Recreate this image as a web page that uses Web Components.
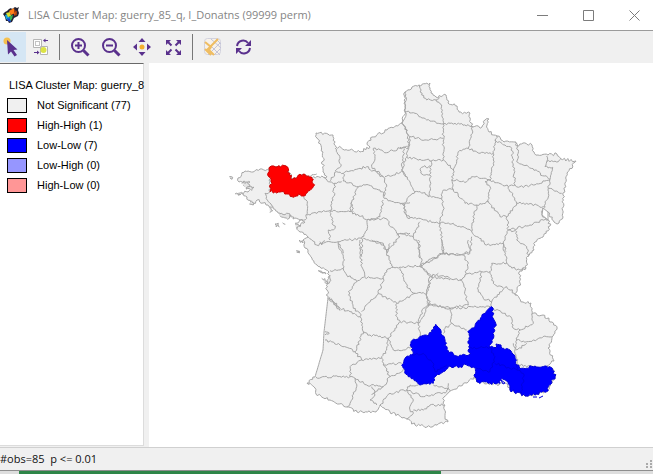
<!DOCTYPE html>
<html lang="en">
<head>
<meta charset="utf-8">
<title>LISA Cluster Map</title>
<style>
html, body { height: 100%; margin: 0; }
body { overflow: hidden; background: #e1e1e1; font-family: "Open Sans", "Noto Sans", sans-serif; }
</style>
</head>
<body>
<cluster-window></cluster-window>

<script>
const define = (name, html, setup) => {
  const template = document.createElement('template');
  template.innerHTML = html;
  customElements.define(name, class extends HTMLElement {
    constructor() {
      super();
      this.attachShadow({ mode: 'open' }).append(template.content.cloneNode(true));
    }
    connectedCallback() { if (setup) setup(this.shadowRoot, this); }
  });
};

define('title-bar', `
<style>
:host { display: flex; align-items: center; height: 30px; background: #fff; color: #858585; border-bottom: 1px solid #9b9b9b; }
.logo { width: 18px; height: 18px; margin: 0 8px 0 2px; flex: none; }
h1 { font-size: 11px; line-height: 16px; font-weight: 400; margin: 0; flex: 1; white-space: nowrap; }
.controls { display: flex; margin-right: -4px; }
button { width: 46px; height: 28px; border: 0; padding: 0; background: none; display: grid; place-items: center; }
button svg { width: 11px; height: 11px; fill: none; stroke: #7c7c7c; }
</style>
<svg class="logo" viewBox="0 0 18 18" aria-hidden="true">
<path fill="#223" d="M1 8l2-2 2-1 2-2 2-1 1 1 3-2 2 1 2-1-1 3 1 3-1 3-4 2-2 4-3 1-1-2-2 0-1-4z"/>
<path fill="#19a8d8" d="M3 9l3-1 2 4-1 3-3-2z"/><path fill="#1646d0" d="M5 12l4 1v3l-3-1z"/>
<path fill="#d8e12c" d="M4 7l4-1 1 4-3 1z"/><path fill="#35b454" d="M8 10l3-1-1 4-2 2z"/>
<path fill="#ff7e16" d="M7 5l5-3 1 5-4 2z"/><path fill="#9c3d12" d="M12 4l3 1v4l-3 1z"/><path fill="#e45a10" d="M11 7l3-1-1 3z"/>
</svg>
<h1><slot></slot></h1>
<div class="controls">
<button aria-label="Minimize"><svg viewBox="0 0 11 11"><path d="M0 5.5h11"/></svg></button>
<button aria-label="Maximize"><svg viewBox="0 0 11 11"><path d="M.5 .5h10v10H.5z"/></svg></button>
<button aria-label="Close"><svg viewBox="0 0 11 11"><path d="M.5 .5l10 10M10.500 .5l-10 10"/></svg></button>
</div>`);

define('tool-button', `
<style>
:host { display: block; width: 31px; flex: none; }
button { width: 100%; height: 30px; border: 0; padding: 0; background: none; display: grid; place-items: center; }
:host([active]) button { background: #d5e6f4; }
::slotted(svg) { width: 20px; height: 20px; }
</style>
<button><slot></slot></button>`, (root, host) => {
  root.querySelector('button').setAttribute('aria-label', host.getAttribute('label'));
});

define('tool-bar', `
<style>
:host { display: flex; align-items: center; height: 32px; background: #f0f0f0; }
tool-button:first-of-type { width: 26px; }
tool-button:nth-of-type(2) { width: 29px; }
i { width: 1px; height: 26px; background: #777; margin: 0 4px; }
</style>
<tool-button label="Select" active><svg viewBox="0 0 20 20"><circle cx="4" cy="4" r="3.500" fill="#f6c04d"/><path fill="#5a318d" d="M4 3l10.500 9.500-4 .5 3.500 5-2.500 1.500-3.500-5-3 3z"/></svg></tool-button>
<tool-button label="Invert Select"><svg viewBox="0 0 20 20" fill="none"><path fill="#fff" stroke="#b5b5b5" d="M2.500 2.500h8v8h-8zM9.500 9.500h7v8h-7z"/><rect x="4.500" y="4.500" width="4" height="4" stroke="#c4c4c4"/><circle cx="12.500" cy="13" r="3" fill="#dce345"/><path stroke="#5a318d" d="M14 3.500h3M3 15.500h4"/><path fill="#5a318d" d="M12 3.500l2.500-2v4zM8.500 15.500l-2.500-2v4z"/></svg></tool-button>
<i></i>
<tool-button label="Zoom In"><svg viewBox="0 0 20 20" fill="none" stroke="#5a318d" stroke-width="2"><circle cx="8.500" cy="8.500" r="6.500"/><path d="M5 8.500h7M8.500 5v7"/><path stroke-width="3" d="M13.500 13.500l5 5"/></svg></tool-button>
<tool-button label="Zoom Out"><svg viewBox="0 0 20 20" fill="none" stroke="#5a318d" stroke-width="2"><circle cx="8.500" cy="8.500" r="6.500"/><path d="M5 8.500h7"/><path stroke-width="3" d="M13.500 13.500l5 5"/></svg></tool-button>
<tool-button label="Pan"><svg viewBox="0 0 20 20" fill="#5a318d"><path d="M10 1l3.500 4h-7zM10 19l3.500-4h-7zM1 10l4-3.500v7zM19 10l-4-3.500v7z"/><circle cx="10" cy="10" r="2.500" fill="#f4b02e"/></svg></tool-button>
<tool-button label="Full Extent"><svg viewBox="0 0 20 20" fill="#5a318d" stroke="#5a318d" stroke-width="2"><path stroke="none" d="M3 3h5L3 8zM18 3h-5l5 5zM3 18h5l-5-5zM18 18h-5l5-5z"/><path d="M4 4l4.500 4.500M17 4l-4.500 4.500M4 17l4.500-4.500M17 17l-4.500-4.500"/></svg></tool-button>
<i></i>
<tool-button label="Base Map"><svg viewBox="0 0 20 20" fill="none"><rect x="1.500" y="1.500" width="16" height="16" rx="3" fill="#f7f2ea" stroke="#d2d2de"/><path stroke="#c3c3d8" d="M8 2l10 9M13 2l5 5M9 10l8 8M17 6L5 18M17 12l-6 6"/><path stroke="#efbd62" stroke-width="2" d="M15 2L4 13M2 5l6 5-2 3 5 5M2 12l6 6"/></svg></tool-button>
<tool-button label="Refresh"><svg viewBox="0 0 20 20" fill="none" stroke="#5a318d" stroke-width="2"><path d="M3 9c1-6 8-7 11-3M16 11c-1 6-8 7-11 3"/><path fill="#5a318d" stroke="none" d="M17 3v6h-6zM2 17v-6h6z"/></svg></tool-button>`);

define('legend-item', `
<style>
:host { display: flex; align-items: center; height: 20px; gap: 10px; white-space: nowrap; }
span { box-sizing: border-box; width: 20px; height: 15px; border: 1px solid #000; flex: none; }
</style>
<span></span><slot></slot>`, (root, host) => {
  root.querySelector('span').style.background = host.getAttribute('color');
});

define('legend-panel', `
<style>
:host { display: block; box-sizing: border-box; background: #fff; border-top: 1px solid #696969; border-right: 1px solid #dcdcdc; border-bottom: 1px solid #dcdcdc; padding: 11px 0 0 7px; margin-bottom: 1px; font: 11px/20px "Liberation Sans", Arial, sans-serif; color: #000; }
h2 { font: inherit; margin: 0 0 0 2px; white-space: nowrap; }
</style>
<h2>LISA Cluster Map: guerry_8</h2>
<legend-item color="#f0f0f0">Not Significant (77)</legend-item>
<legend-item color="#ff0000">High-High (1)</legend-item>
<legend-item color="#0000ff">Low-Low (7)</legend-item>
<legend-item color="#9696ff">Low-High (0)</legend-item>
<legend-item color="#ff9696">High-Low (0)</legend-item>`);

const OUTLINE = '405,92 412,87 419,85 430,83 431,93 436,97 446,95 448,103 457,106 459,112 470,113 471,123 473,127 482,127 485,120 489,119 487,125 489,132 497,136 504,142 515,142 517,146 523,143 532,145 534,152 538,155 548,155 557,154 561,159 576,161 567,173 563,195 563,217 559,223 554,222 548,212 543,208 542,215 548,220 550,226 543,237 535,242 534,250 528,256 526,268 519,272 520,283 515,295 523,302 531,303 532,314 543,315 552,322 557,329 552,337 548,348 554,361 547,366 552,368 555,377 548,390 537,394 525,396 510,390 508,385 503,383 499,385 488,383 477,382 474,377 467,383 450,391 444,397 445,417 448,422 440,423 432,427 415,425 407,419 390,412 380,405 376,412 357,412 347,407 330,400 316,394 315,388 307,383 315,377 323,350 324,332 328,298 327,290 327,282 329,272 317,265 305,248 303,240 308,237 300,232 297,227 305,222 300,220 293,219 291,215 286,217 278,213 273,207 263,203 257,200 252,205 247,197 243,194 237,194 248,192 251,189 246,189 252,187 243,185 250,182 244,181 239,182 238,178 245,171 253,172 260,169 269,170 272,166 286,166 293,179 303,174 312,178 327,177 323,172 323,152 317,138 316,133 333,135 336,147 360,152 370,147 367,143 372,137 387,130 402,123 406,113';

/* Department borders, four sheets drawn at three units per map unit. */
const SHEETS = [
  [220, 70, `148,300 150,365 135,370 145,395 160,410|250,375 262,400 260,445 225,460|260,435 300,425 332,420|345,340 340,380 332,422|312,320 325,335 345,340 365,335|330,332 350,305 370,310|345,303 362,290 360,265 345,235|370,310 390,303 440,290 490,322|460,235 465,265 455,290 490,320 500,345 490,380 510,392 550,405|460,235 500,248 540,235 565,232|545,160 562,180 567,230|552,235 545,300 560,320|370,310 370,333 415,350 435,345 480,360 495,378|415,350 395,395 390,425|332,422 350,425 390,425 445,448|332,422 335,450 345,475 325,480 330,510|490,390 480,440 445,448|395,395 400,425|445,448 435,490 425,505 385,510 355,515 330,515 290,525 262,500|445,448 495,445 530,490 540,500 500,545 490,520 430,505|425,505 425,560|355,515 370,550|530,495 570,490|495,320 550,305|550,405 560,440 570,445|550,405 570,398|300,515 305,525 315,512`],
  [400, 70, `16,65 15,125 45,130 80,150 130,162|58,46 65,75 80,90 108,90 125,105 130,162|108,90 118,82|130,162 165,160 218,170|15,125 5,160 20,180 30,200 80,210 130,205|130,162 130,270 95,272 60,268 20,262 30,200|218,170 205,235 240,250 280,250 285,210 290,197|205,235 175,245 170,275 160,300 130,270|160,300 155,330 200,335 220,320 270,330 280,280 280,250|0,232 25,235|20,262 5,300 30,335 45,365|93,272 90,345 85,380|93,290 70,290 60,300 70,315 90,315|85,380 75,368 45,365 12,400 15,430 40,445 120,460 130,410 125,385 85,380|12,400 0,402|125,385 130,360 160,358 155,330|160,358 195,400 230,405 265,395 270,350 255,335 270,330|285,210 315,225 335,235 340,285 345,345 325,350 270,330|345,215 355,240 350,275 385,290 450,328|440,258 440,275 475,275 482,267|440,275 435,290 458,292 450,328|345,345 355,352 400,345 450,330|450,328 445,355 485,370|325,350 340,380 350,400 380,400 435,412 445,370 445,355|350,400 320,440 325,480 390,465 440,445|265,395 300,440 320,440|230,405 215,470 215,485 260,525 310,520 325,480|120,460 160,460 215,485|120,460 130,550 180,555 210,545 215,500|325,480 350,485 350,510 380,530 385,560|310,520 318,545|0,490 40,500 60,455|40,500 55,520 60,565`],
  [290, 240, `145,10 160,50 160,85 120,92|160,85 170,105 200,125 225,110 215,80 210,0|225,113 280,115 290,90 310,82|245,0 280,15 290,40 310,82|300,10 290,40|310,82 340,80 395,78 385,0|395,78 425,110 410,160 375,160 355,145 330,85|395,78 440,55 450,40 480,45|200,125 175,155 190,205 210,220|280,115 265,160 215,215|265,160 320,190 375,160|320,190 320,230 330,245 295,295 240,285 220,275 210,220|330,245 385,250 415,200 410,160|410,190 480,205|385,250 390,290|425,110 480,120|113,175 150,205 180,215 210,230|122,175 150,212|220,275 195,335 150,315 105,300|295,295 290,330 275,355 215,360 195,335|295,295 310,330 340,330 365,320|275,355 280,375 335,370|215,360 185,375 180,410|280,375 300,410 280,440 230,435 195,415 180,410 78,412|195,415 200,440 180,490 172,500|245,440 255,465 240,480 260,495|300,410 335,395 345,380|245,465 280,440|270,495 300,460 350,450 370,480 360,510 370,520 350,537|350,450 360,435 385,435|370,510 400,510 420,495 465,495|350,450 400,470 470,455 475,430|105,275 118,280 105,285`],
  [400, 240, `60,75 90,110 80,160|60,75 120,45 130,40 125,0|130,40 190,45 205,70 195,105|110,105 180,120 190,130 205,195 150,205 90,195 80,160|90,110 115,100|205,0 210,40 190,45|310,10 320,70 275,70 270,95|320,70 350,90 378,85|245,95 235,150 250,175 275,185 320,140 350,165|180,120 195,105 245,95 270,95 280,130 310,145|150,205 250,200 270,200|275,185 275,205|55,250 70,205 90,195|150,205 155,250 135,265 130,280|155,250 200,270|275,205 310,220 335,235 340,265 360,270 400,250 395,222|360,270 350,300 345,340|350,300 380,305 440,290 455,290|340,310 350,330 380,310|345,340 355,375 400,380|100,435 140,445 150,452`]
];
const BLUE = '107,253 115,262 122,270 135,300 140,330 160,342 175,350 190,343 207,345 208,300 203,275 225,260 245,230 275,200 280,235 287,250 275,300 270,322 290,322 288,312 303,315 305,325 330,330 345,350 350,375 365,385 400,380 435,378 457,385 465,410 445,440 445,452 410,462 375,468 330,450 325,432 305,415 300,430 265,430 230,425 222,405 230,385 200,375 180,380 150,378 130,395 105,410 100,430 60,435 25,410 5,375 15,355 37,345 33,305 65,288 85,288 95,270';
const BLUE_LINES = '37,345 70,340 95,365 105,395 140,375|207,325 270,322|270,322 285,350 270,395 230,385|285,370 350,390 370,400 365,460|350,375 350,390';
const RED = '148,300 155,288 198,288 208,315 218,328 232,320 250,312 265,318 280,328 280,350 250,378 235,372 220,382 205,372 180,366 150,365 153,335 146,320';
const ISLES = [
  [220, 70, '28,320 38,322 36,328 30,324|45,372 60,373 54,376|165,462 175,460 178,470 168,470 165,462|188,458 196,463|238,510 248,512 249,519 241,517 238,510|229,542 238,543 238,549 230,547|272,318 290,312|65,340 80,335 90,345 78,355|85,350 102,352 95,362|95,392 100,405 88,402|148,412 158,422 150,428|178,432 195,434 210,432 208,445 190,442 180,437|225,462 240,468 228,474'],
  [290, 240, '20,32 28,36 22,37|85,92 95,94 108,102 95,98 85,92|95,115 105,116 112,132 104,128|112,130 122,122 120,105|118,172 128,185 140,190 148,205']
];

define('map-view', `
<style>
:host { display: grid; place-items: start; background: #fff; overflow: hidden; min-width: 0; }
svg { width: 100%; height: 100%; display: block; }
path { vector-effect: non-scaling-stroke; stroke-linejoin: round; }
</style>
<svg viewBox="149 63 504 384" preserveAspectRatio="xMidYMid meet" role="img" aria-label="Cluster map of French departments"></svg>`, root => {
  const svg = root.querySelector('svg');
  const parse = (s, ox = 0, oy = 0, k = 1) => s.trim().split(' ').map(p => {
    const [x, y] = p.split(',');
    return [ox + x / k, oy + y / k];
  });
  const noise = (x, y) => {
    const n = Math.sin(x * 12.9898 + y * 78.233) * 43758.5453;
    return (n - Math.floor(n)) - 0.5;
  };
  const rough = (points, close, amp = 2.4) => {
    const list = close ? [...points, points[0]] : points;
    let d = 'M' + list[0].map(v => v.toFixed(1));
    for (let i = 1; i < list.length; i++) {
      const [ax, ay] = list[i - 1], [bx, by] = list[i];
      const len = Math.hypot(bx - ax, by - ay);
      const steps = Math.max(1, Math.round(len / 1.7));
      const straight = ax < 329 && bx < 329 && ay > 297 && by > 297 && len > 15;
      for (let j = 1; j <= steps; j++) {
        const t = j / steps;
        const x = ax + (bx - ax) * t, y = ay + (by - ay) * t;
        const o = j === steps || straight ? 0 : noise(Math.round(x * 3), Math.round(y * 3)) * amp;
        d += 'L' + (x - (by - ay) / len * o).toFixed(1) + ',' + (y + (bx - ax) / len * o).toFixed(1);
      }
    }
    return d + (close ? 'Z' : '');
  };
  const add = (d, fill, stroke) => {
    const p = document.createElementNS('http://www.w3.org/2000/svg', 'path');
    p.setAttribute('d', d);
    p.setAttribute('fill', fill);
    p.setAttribute('stroke', stroke);
    svg.append(p);
  };
  add(rough(parse(OUTLINE), true, 2.8), '#f0f0f0', '#a6a6a6');
  for (const [x, y, lines] of SHEETS)
    add(lines.split('|').map(l => rough(parse(l, x, y, 3), false)).join(''), 'none', '#a6a6a6');
  for (const [x, y, lines] of ISLES)
    add(lines.split('|').map(l => rough(parse(l, x, y, 3), false)).join(''), '#e4e4e4', '#a6a6a6');
  add('M543 208L548 212L548 220L542 215Z', '#fff', '#a6a6a6');
  add(rough(parse(BLUE, 400, 240, 3), true, 2.8), '#0000ff', '#0000d8');
  add(BLUE_LINES.split('|').map(l => rough(parse(l, 400, 240, 3), false)).join(''), 'none', '#0000e0');
  add('M533 397h4M539 398l4-2', 'none', '#0000d8');
  add('M501 380l4 3l-2 1z', '#fff', '#0000d8');
  add(rough(parse(RED, 220, 70, 3), true, 2.8), '#ff0000', '#d00000');
});

define('status-bar', `
<style>
:host { display: flex; align-items: center; height: 22px; background: #f0f0f0; border-top: 1px solid #d0d0d0; border-bottom: 1px solid #8e8e8e; font-size: 11px; line-height: 16px; color: #111; white-space: pre; }
span { flex: 1; }
svg { width: 8px; height: 10px; align-self: flex-end; fill: #aaa; }
</style>
<span><slot></slot></span>
<svg viewBox="0 0 8 10" aria-hidden="true"><path d="M5 0h2v2H5zM5 3h2v2H5zM1 3h2v2H1zM5 6h2v2H5zM1 6h2v2H1z"/></svg>`);

define('cluster-window', `
<style>
:host { display: flex; flex-direction: column; height: 100%; }
main { flex: 1; min-height: 0; display: grid; grid-template-columns: 144px minmax(0, 1fr); column-gap: 5px; background: #f0f0f0; }
.desk { height: 3px; display: grid; grid-template-columns: 19fr 422fr 212fr; background: #dedede; }
.desk b { grid-column: 2; background: #2e8548; }
</style>
<title-bar>LISA Cluster Map: guerry_85_q, I_Donatns (99999 perm)</title-bar>
<tool-bar></tool-bar>
<main><legend-panel></legend-panel><map-view></map-view></main>
<status-bar>#obs=85  p &lt;= 0.01</status-bar>
<div class="desk"><b></b></div>`);
</script>
</body>
</html>
